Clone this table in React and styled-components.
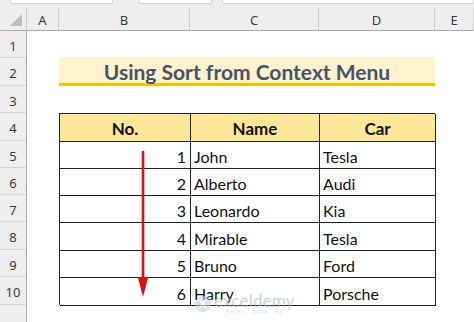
import styled, { createGlobalStyle } from 'styled-components'

const columns = ['A', 'B', 'C', 'D', 'E']
const rowHeights = [27, 28, 27, 28, 27, 27, 27, 28, 27, 28, 30]

const people = [
    { no: 1, name: 'John', car: 'Tesla' },
    { no: 2, name: 'Alberto', car: 'Audi' },
    { no: 3, name: 'Leonardo', car: 'Kia' },
    { no: 4, name: 'Mirable', car: 'Tesla' },
    { no: 5, name: 'Bruno', car: 'Ford' },
    { no: 6, name: 'Harry', car: 'Porsche' },
]

const GlobalStyle = createGlobalStyle`
    html, body {
        margin: 0;
        padding: 0;
        background: #ffffff;
        overflow: hidden;
    }
    * {
        box-sizing: border-box;
    }
`

function App() {
    return (
        <Page>
            <GlobalStyle />
            <FormulaStrip>
                <FieldBox $left={10} $width={103} />
                <FieldBox $left={26} $width={73} />
                <FieldBox $left={10} $width={252} />
            </FormulaStrip>
            <Sheet>
                <Corner>
                    <CornerMark />
                </Corner>
                {columns.map((c) => (
                    <ColHeader key={c}>{c}</ColHeader>
                ))}
                {rowHeights.map((h, i) => (
                    <RowHeader key={i} style={{ gridRow: i + 2 }}>
                        {i < 10 ? i + 1 : ''}
                    </RowHeader>
                ))}

                <Banner>Using Sort from Context Menu</Banner>

                <DataTable>
                    <HeadCell>No.</HeadCell>
                    <HeadCell>Name</HeadCell>
                    <HeadCell>Car</HeadCell>
                    {people.map((p) => (
                        <Row key={p.no}>
                            <Cell $align="right">{p.no}</Cell>
                            <Cell>{p.name}</Cell>
                            <Cell>{p.car}</Cell>
                        </Row>
                    ))}
                </DataTable>

                <Arrow width="12" height="147" viewBox="0 0 12 147">
                    <line x1="6" y1="0" x2="6" y2="130" stroke="#e00f12" strokeWidth="2.6" />
                    <polygon points="0.8,126 11.2,126 6,146" fill="#e00f12" />
                </Arrow>

                {/* faint site watermark over the last rows */}
                <Watermark>
                    <Logo width="18" height="18" viewBox="0 0 20 20">
                        <circle cx="10" cy="10" r="9" fill="#c9cfe4" />
                        <path d="M6 5 L10 10 L6 15 M14 5 L10 10 L14 15" stroke="#ffffff" strokeWidth="2" fill="none" />
                    </Logo>
                    <Brand>
                        <BrandName>exceldemy</BrandName>
                        <BrandSub>EXCEL · DATA · BI</BrandSub>
                    </Brand>
                </Watermark>
            </Sheet>
        </Page>
    )
}

const Page = styled.div`
    width: 474px;
    height: 322px;
    overflow: hidden;
    background: #ffffff;
`

const FormulaStrip = styled.div`
    height: 8px;
    display: flex;
    align-items: flex-start;
    background: #ededed;
`

const FieldBox = styled.div`
    margin-left: ${(p) => p.$left}px;
    width: ${(p) => p.$width}px;
    height: 4px;
    background: #ffffff;
    border: 1px solid #d6d6d6;
    border-top: none;
`

const Sheet = styled.div`
    position: relative;
    display: grid;
    grid-template-columns: 27px 32px 131px 129px 116px 1fr;
    grid-template-rows: 23px ${rowHeights.map((h) => h + 'px').join(' ')};
    font-family: 'Noto Sans', 'Liberation Sans', sans-serif;
`

const HeaderBase = styled.div`
    background: #eeeeee;
    color: #3b3b3b;
    font-size: 13px;
    display: flex;
    align-items: center;
    justify-content: center;
`

const Corner = styled(HeaderBase)`
    grid-column: 1;
    grid-row: 1;
    position: relative;
    border-right: 1px solid #c9c9c9;
    border-bottom: 1px solid #a9a9a9;
`

const CornerMark = styled.div`
    position: absolute;
    right: 4px;
    bottom: 4px;
    width: 0;
    height: 0;
    border-left: 12px solid transparent;
    border-bottom: 12px solid #bdbdbd;
`

const ColHeader = styled(HeaderBase)`
    grid-row: 1;
    border-right: 1px solid #cfcfcf;
    border-bottom: 1px solid #a9a9a9;
    padding-top: 2px;
`

const RowHeader = styled(HeaderBase)`
    grid-column: 1;
    border-right: 1px solid #a9a9a9;
    border-bottom: 1px solid #d2d2d2;
    padding-top: 3px;
`

const Banner = styled.div`
    grid-column: 3 / 6;
    grid-row: 3;
    margin-top: -1px;
    background: #fff2cc;
    border-bottom: 3px solid #ffc000;
    color: #44546a;
    font-family: Lato, 'Open Sans', sans-serif;
    font-weight: 700;
    font-size: 21px;
    display: flex;
    align-items: center;
    justify-content: center;
    padding-top: 2px;
`

const DataTable = styled.div`
    grid-column: 3 / 6;
    grid-row: 5 / 12;
    display: grid;
    grid-template-columns: 131px 129px 116px;
    grid-template-rows: 28px 27px 27px 27px 28px 27px 28px;
    border-top: 1px solid #222222;
    border-left: 1px solid #222222;
    font-family: Lato, 'Open Sans', sans-serif;
    color: #111111;
`

const HeadCell = styled.div`
    background: #ffe699;
    border-right: 1px solid #222222;
    border-bottom: 1px solid #222222;
    font-weight: 700;
    font-size: 17px;
    display: flex;
    align-items: center;
    justify-content: center;
    padding-top: 2px;
`

const Row = styled.div`
    display: contents;
`

const Cell = styled.div`
    border-right: 1px solid #222222;
    border-bottom: 1px solid #222222;
    font-size: 16px;
    display: flex;
    align-items: center;
    justify-content: ${(p) => (p.$align === 'right' ? 'flex-end' : 'flex-start')};
    padding: 3px 4px 0 3px;
`

const Arrow = styled.svg`
    position: absolute;
    left: 137px;
    top: 143px;
`

const Watermark = styled.div`
    position: absolute;
    left: 194px;
    top: 285px;
    display: flex;
    align-items: center;
    gap: 2px;
    opacity: 0.6;
    pointer-events: none;
`

const Logo = styled.svg`
    display: block;
`

const Brand = styled.div`
    display: flex;
    flex-direction: column;
    align-items: center;
    gap: 2px;
    line-height: 1;
`

const BrandName = styled.span`
    font-family: Lato, 'Open Sans', sans-serif;
    font-size: 17px;
    line-height: 15px;
    color: #aab5d0;
    letter-spacing: 0.2px;
`

const BrandSub = styled.span`
    font-family: 'Noto Sans', sans-serif;
    font-size: 5px;
    line-height: 5px;
    color: #b8bfd0;
    letter-spacing: 1px;
`

export default App
